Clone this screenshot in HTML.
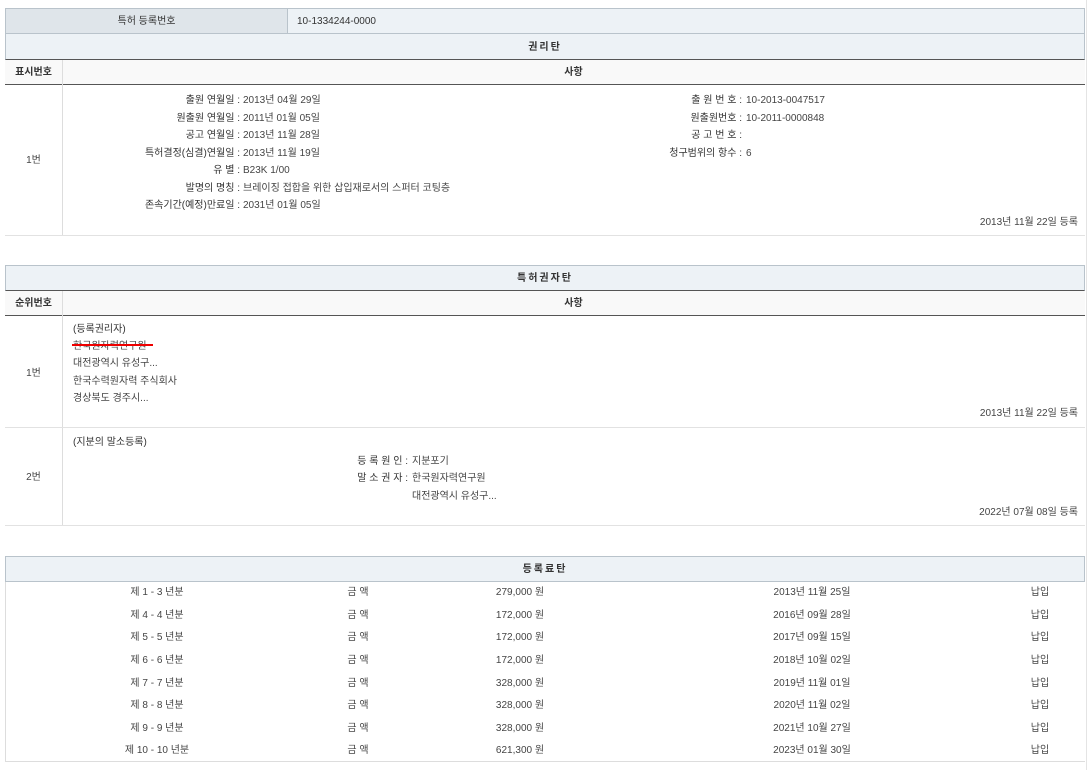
<!DOCTYPE html>
<html><head><meta charset="utf-8"><style>
*{margin:0;padding:0;box-sizing:border-box}
body{width:1088px;height:770px;background:#fff;position:relative;overflow:hidden;font-family:"Liberation Sans","Noto Sans CJK KR",sans-serif;font-size:10px;color:#444}
.a{position:absolute;white-space:nowrap;line-height:12px;margin-top:2px}
.b{position:absolute}
.r{text-align:right}
.c{text-align:center}
.h{color:#333;font-weight:bold}
</style></head><body>
<div class="b" style="left:1086px;top:0;width:1px;height:770px;background:#e4e4e4"></div>
<!-- section 1 -->
<div class="b" style="left:5px;top:8px;width:1080px;height:26px;background:#edf2f6;border:1px solid #b9c3cb"></div>
<div class="b" style="left:5px;top:8px;width:283px;height:26px;background:#dfe5ea;border:1px solid #b9c3cb"></div>
<div class="a c" style="left:5px;top:14px;width:283px;color:#333">특허 등록번호</div>
<div class="a" style="left:297px;top:14px;color:#333">10-1334244-0000</div>
<div class="b" style="left:5px;top:34px;width:1080px;height:26px;background:#edf2f6;border:1px solid #b9c3cb;border-top:none;border-bottom:1px solid #555"></div>
<div class="a c h" style="left:5px;top:40px;width:1080px;letter-spacing:2px">권리탄</div>
<div class="b" style="left:5px;top:60px;width:1080px;height:25px;background:#f9f9f9;border-bottom:1px solid #555"></div>
<div class="a c h" style="left:5px;top:65px;width:57px">표시번호</div>
<div class="a c h" style="left:62px;top:65px;width:1023px">사항</div>
<div class="b" style="left:62px;top:60px;width:1px;height:175px;background:#ddd"></div>
<div class="b" style="left:5px;top:235px;width:1080px;height:1px;background:#e2e2e2"></div>
<div class="a c" style="left:5px;top:153px;width:57px">1번</div>
<div class="a r" style="left:60px;top:93px;width:180px;color:#333">출원 연월일 :</div><div class="a" style="left:243px;top:93px">2013년 04월 29일</div>
<div class="a r" style="left:60px;top:111px;width:180px;color:#333">원출원 연월일 :</div><div class="a" style="left:243px;top:111px">2011년 01월 05일</div>
<div class="a r" style="left:60px;top:128px;width:180px;color:#333">공고 연월일 :</div><div class="a" style="left:243px;top:128px">2013년 11월 28일</div>
<div class="a r" style="left:60px;top:146px;width:180px;color:#333">특허결정(심결)연월일 :</div><div class="a" style="left:243px;top:146px">2013년 11월 19일</div>
<div class="a r" style="left:60px;top:163px;width:180px;color:#333">유 별 :</div><div class="a" style="left:243px;top:163px">B23K 1/00</div>
<div class="a r" style="left:60px;top:181px;width:180px;color:#333">발명의 명칭 :</div><div class="a" style="left:243px;top:181px">브레이징 접합을 위한 삽입재로서의 스퍼터 코팅층</div>
<div class="a r" style="left:60px;top:198px;width:180px;color:#333">존속기간(예정)만료일 :</div><div class="a" style="left:243px;top:198px">2031년 01월 05일</div>
<div class="a r" style="left:560px;top:93px;width:182px;color:#333">출 원 번 호 :</div><div class="a" style="left:746px;top:93px">10-2013-0047517</div>
<div class="a r" style="left:560px;top:111px;width:182px;color:#333">원출원번호 :</div><div class="a" style="left:746px;top:111px">10-2011-0000848</div>
<div class="a r" style="left:560px;top:128px;width:182px;color:#333">공 고 번 호 :</div>
<div class="a r" style="left:560px;top:146px;width:182px;color:#333">청구범위의 항수 :</div><div class="a" style="left:746px;top:146px">6</div>
<div class="a r" style="left:800px;top:215px;width:278px">2013년 11월 22일 등록</div>
<!-- section 2 -->
<div class="b" style="left:5px;top:265px;width:1080px;height:26px;background:#edf2f6;border:1px solid #b9c3cb;border-bottom:1px solid #555"></div>
<div class="a c h" style="left:5px;top:271px;width:1080px;letter-spacing:2px">특허권자탄</div>
<div class="b" style="left:5px;top:291px;width:1080px;height:25px;background:#f9f9f9;border-bottom:1px solid #555"></div>
<div class="a c h" style="left:5px;top:296px;width:57px">순위번호</div>
<div class="a c h" style="left:62px;top:296px;width:1023px">사항</div>
<div class="b" style="left:62px;top:291px;width:1px;height:234px;background:#ddd"></div>
<div class="b" style="left:5px;top:427px;width:1080px;height:1px;background:#e2e2e2"></div>
<div class="b" style="left:5px;top:525px;width:1080px;height:1px;background:#e2e2e2"></div>
<div class="a c" style="left:5px;top:366px;width:57px">1번</div>
<div class="a" style="left:73px;top:322px;color:#333">(등록권리자)</div>
<div class="a" style="left:73px;top:339px">한국원자력연구원</div>
<div class="b" style="left:72px;top:344px;width:81px;height:2px;background:#e00"></div>
<div class="a" style="left:73px;top:356px">대전광역시 유성구...</div>
<div class="a" style="left:73px;top:374px">한국수력원자력 주식회사</div>
<div class="a" style="left:73px;top:391px">경상북도 경주시...</div>
<div class="a r" style="left:800px;top:406px;width:278px">2013년 11월 22일 등록</div>
<div class="a c" style="left:5px;top:470px;width:57px">2번</div>
<div class="a" style="left:73px;top:435px;color:#333">(지분의 말소등록)</div>
<div class="a r" style="left:250px;top:454px;width:158px;color:#333">등 록 원 인 :</div><div class="a" style="left:412px;top:454px">지분포기</div>
<div class="a r" style="left:250px;top:471px;width:158px;color:#333">말 소 권 자 :</div><div class="a" style="left:412px;top:471px">한국원자력연구원</div>
<div class="a" style="left:412px;top:489px">대전광역시 유성구...</div>
<div class="a r" style="left:800px;top:505px;width:278px">2022년 07월 08일 등록</div>
<!-- section 3 -->
<div class="b" style="left:5px;top:556px;width:1080px;height:26px;background:#edf2f6;border:1px solid #b9c3cb"></div>
<div class="a c h" style="left:5px;top:562px;width:1080px;letter-spacing:2px">등록료탄</div>
<div class="b" style="left:5px;top:582px;width:1px;height:180px;background:#ddd"></div>
<div class="b" style="left:5px;top:761px;width:1080px;height:1px;background:#ddd"></div>
<div class="a c" style="left:57px;top:585px;width:200px">제 1 - 3 년분</div><div class="a c" style="left:308px;top:585px;width:100px">금 액</div><div class="a c" style="left:460px;top:585px;width:120px">279,000 원</div><div class="a c" style="left:742px;top:585px;width:140px">2013년 11월 25일</div><div class="a c" style="left:1000px;top:585px;width:80px">납입</div>
<div class="a c" style="left:57px;top:608px;width:200px">제 4 - 4 년분</div><div class="a c" style="left:308px;top:608px;width:100px">금 액</div><div class="a c" style="left:460px;top:608px;width:120px">172,000 원</div><div class="a c" style="left:742px;top:608px;width:140px">2016년 09월 28일</div><div class="a c" style="left:1000px;top:608px;width:80px">납입</div>
<div class="a c" style="left:57px;top:630px;width:200px">제 5 - 5 년분</div><div class="a c" style="left:308px;top:630px;width:100px">금 액</div><div class="a c" style="left:460px;top:630px;width:120px">172,000 원</div><div class="a c" style="left:742px;top:630px;width:140px">2017년 09월 15일</div><div class="a c" style="left:1000px;top:630px;width:80px">납입</div>
<div class="a c" style="left:57px;top:653px;width:200px">제 6 - 6 년분</div><div class="a c" style="left:308px;top:653px;width:100px">금 액</div><div class="a c" style="left:460px;top:653px;width:120px">172,000 원</div><div class="a c" style="left:742px;top:653px;width:140px">2018년 10월 02일</div><div class="a c" style="left:1000px;top:653px;width:80px">납입</div>
<div class="a c" style="left:57px;top:676px;width:200px">제 7 - 7 년분</div><div class="a c" style="left:308px;top:676px;width:100px">금 액</div><div class="a c" style="left:460px;top:676px;width:120px">328,000 원</div><div class="a c" style="left:742px;top:676px;width:140px">2019년 11월 01일</div><div class="a c" style="left:1000px;top:676px;width:80px">납입</div>
<div class="a c" style="left:57px;top:698px;width:200px">제 8 - 8 년분</div><div class="a c" style="left:308px;top:698px;width:100px">금 액</div><div class="a c" style="left:460px;top:698px;width:120px">328,000 원</div><div class="a c" style="left:742px;top:698px;width:140px">2020년 11월 02일</div><div class="a c" style="left:1000px;top:698px;width:80px">납입</div>
<div class="a c" style="left:57px;top:721px;width:200px">제 9 - 9 년분</div><div class="a c" style="left:308px;top:721px;width:100px">금 액</div><div class="a c" style="left:460px;top:721px;width:120px">328,000 원</div><div class="a c" style="left:742px;top:721px;width:140px">2021년 10월 27일</div><div class="a c" style="left:1000px;top:721px;width:80px">납입</div>
<div class="a c" style="left:57px;top:743px;width:200px">제 10 - 10 년분</div><div class="a c" style="left:308px;top:743px;width:100px">금 액</div><div class="a c" style="left:460px;top:743px;width:120px">621,300 원</div><div class="a c" style="left:742px;top:743px;width:140px">2023년 01월 30일</div><div class="a c" style="left:1000px;top:743px;width:80px">납입</div>
</body></html>
